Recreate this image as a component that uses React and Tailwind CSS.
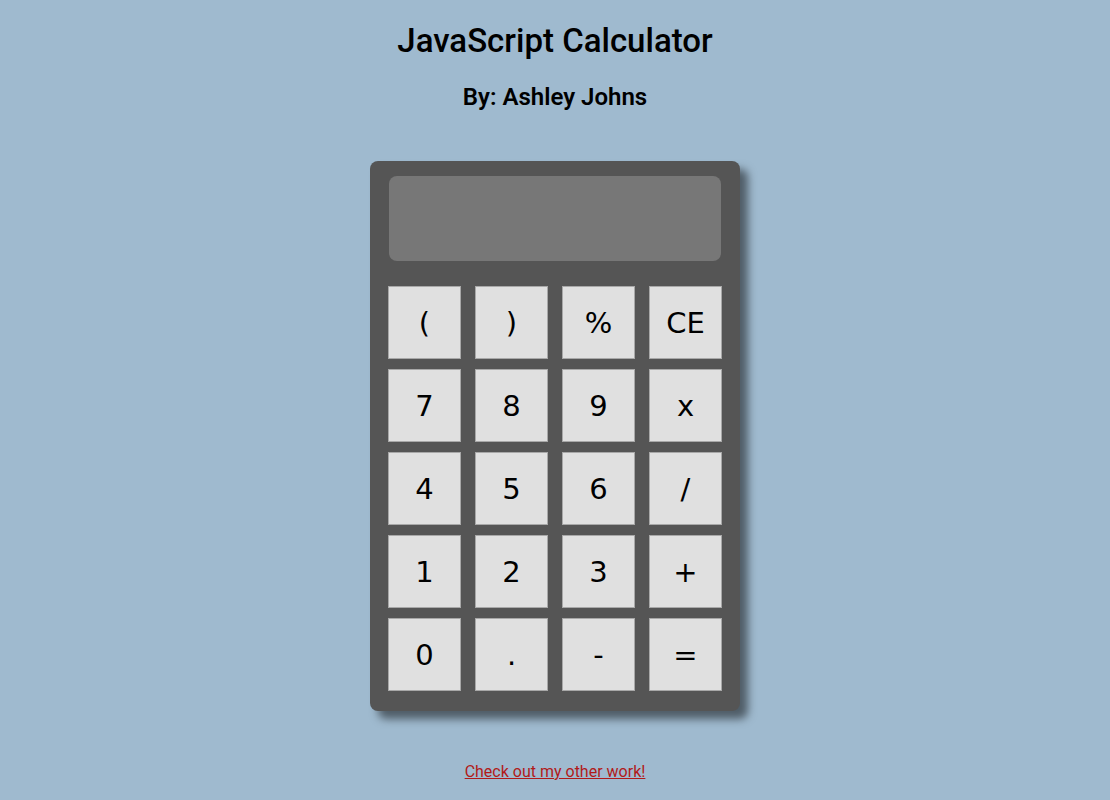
export default function App() {
  const keys = ["(", ")", "%", "CE", "7", "8", "9", "x", "4", "5", "6", "/", "1", "2", "3", "+", "0", ".", "-", "="];

  return (
    <div className="min-h-[800px] bg-[#9fbacf] flex flex-col items-center font-['Roboto',sans-serif] text-black">
      <h1 className="mt-[22px] text-[33px] leading-[38px] font-medium">JavaScript Calculator</h1>
      <h2 className="mt-[23px] text-[24px] leading-[28px] font-semibold">By: Ashley Johns</h2>

      <div className="mt-[50px] w-[370px] h-[550px] bg-[#555555] rounded-lg shadow-[8px_8px_8px_rgba(0,0,0,0.5)] pt-[15px] px-[18px]">
        <div className="mx-px h-[85px] bg-[#777777] rounded-lg" />
        <div className="mt-[25px] grid grid-cols-4 gap-x-[14px] gap-y-[10px]">
          {keys.map((k) => (
            <button
              key={k}
              className="h-[73px] bg-[#e0e0e0] border border-[#a8a8a8] text-[29px] font-['DejaVu_Sans',sans-serif] flex items-center justify-center pt-[2px]"
            >
              {k}
            </button>
          ))}
        </div>
      </div>

      <a href="#" className="mt-[51px] text-[16px] leading-[20px] text-[#b11a1a] underline">
        Check out my other work!
      </a>
    </div>
  );
}
